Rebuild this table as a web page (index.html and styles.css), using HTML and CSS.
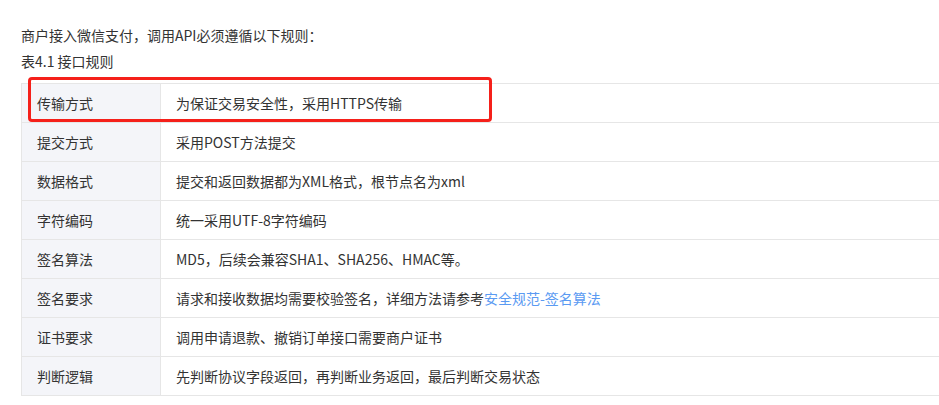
FILE: index.html
```html
<!DOCTYPE html>
<html lang="zh-CN">
<head>
<meta charset="utf-8">
<title>接口规则</title>
<link rel="stylesheet" href="styles.css">
</head>
<body>
<div class="doc">
  <p class="para">商户接入微信支付，调用API必须遵循以下规则：</p>
  <p class="para">表4.1&nbsp;接口规则</p>
  <div class="table-wrap">
    <table class="rules">
      <tbody>
        <tr><td class="key">传输方式</td><td class="val">为保证交易安全性，采用HTTPS传输</td></tr>
        <tr><td class="key">提交方式</td><td class="val">采用POST方法提交</td></tr>
        <tr><td class="key">数据格式</td><td class="val">提交和返回数据都为XML格式，根节点名为xml</td></tr>
        <tr><td class="key">字符编码</td><td class="val">统一采用UTF-8字符编码</td></tr>
        <tr><td class="key">签名算法</td><td class="val">MD5，后续会兼容SHA1、SHA256、HMAC等。</td></tr>
        <tr><td class="key">签名要求</td><td class="val">请求和接收数据均需要校验签名，详细方法请参考<a class="link" href="#">安全规范-签名算法</a></td></tr>
        <tr><td class="key">证书要求</td><td class="val">调用申请退款、撤销订单接口需要商户证书</td></tr>
        <tr><td class="key">判断逻辑</td><td class="val">先判断协议字段返回，再判断业务返回，最后判断交易状态</td></tr>
      </tbody>
    </table>
    <div class="highlight"></div>
  </div>
</div>
</body>
</html>
```
FILE: styles.css
```css
html, body {
  margin: 0;
  padding: 0;
  background: #fff;
}
body {
  font-family: "Noto Sans CJK SC", "Noto Sans", sans-serif;
  font-size: 14px;
  color: #333;
}
.doc {
  padding: 22px 0 0 21px;
}
.para {
  margin: 0;
  line-height: 26px;
}
.table-wrap {
  position: relative;
  margin-top: 9px;
}
.rules {
  border-collapse: collapse;
  width: 100%;
}
.rules td {
  border: 1px solid #e6e6e6;
  height: 39px;
  padding: 0 15px;
  box-sizing: border-box;
  line-height: 20px;
  vertical-align: middle;
}
.rules .key {
  width: 139px;
  background: #f4f5f9;
}
.rules .val {
  background: #fff;
  border-right: none;
}
.link {
  color: #5a9af2;
  text-decoration: none;
}
.highlight {
  position: absolute;
  left: 7px;
  top: -6px;
  width: 464px;
  height: 45px;
  box-sizing: border-box;
  border: 3px solid #f5201a;
  border-radius: 4px;
  pointer-events: none;
}
```
